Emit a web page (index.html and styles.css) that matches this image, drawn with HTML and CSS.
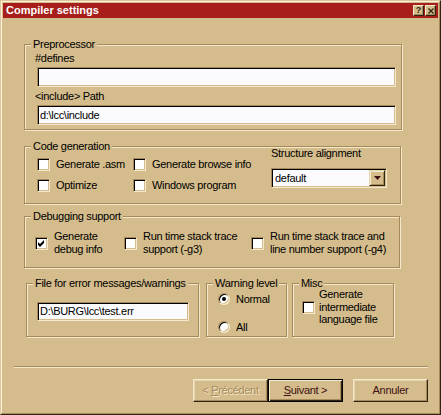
FILE: index.html
```html
<!DOCTYPE html>
<html>
<head>
<meta charset="utf-8">
<link rel="stylesheet" href="styles.css">
</head>
<body>
<div class="window">
  <div class="frame">
    <div class="titlebar">
      <span class="title">Compiler settings</span>
      <span class="tbtns">
        <span class="tbtn">?</span>
        <span class="tbtn"><svg width="6" height="6" viewBox="0 0 6 6"><path d="M0.5 0.5L5.5 5.5M5.5 0.5L0.5 5.5" stroke="#2f2412" stroke-width="1.3"/></svg></span>
      </span>
    </div>
    <div class="client">
      <fieldset class="grp pre">
        <legend>Preprocessor</legend>
        <div class="body">
          <div class="lbl">#defines</div>
          <div class="field"></div>
          <div class="lbl lbl2">&lt;include&gt; Path</div>
          <div class="field">d:\lcc\include</div>
        </div>
      </fieldset>

      <fieldset class="grp code">
        <legend>Code generation</legend>
        <div class="body">
          <div class="cbgrid">
            <div class="chk"><span class="cb"></span><span>Generate .asm</span></div>
            <div class="chk"><span class="cb"></span><span>Generate browse info</span></div>
            <div class="chk"><span class="cb"></span><span>Optimize</span></div>
            <div class="chk"><span class="cb"></span><span>Windows program</span></div>
          </div>
          <div class="align">
            <div class="lbl">Structure alignment</div>
            <div class="combo">
              <span class="ctext">default</span>
              <span class="dd"><svg width="7" height="4" viewBox="0 0 7 4"><path d="M0 0H7L3.5 4Z" fill="#401010"/></svg></span>
            </div>
          </div>
        </div>
      </fieldset>

      <fieldset class="grp debug">
        <legend>Debugging support</legend>
        <div class="body">
          <div class="chk d1"><span class="cb"><svg width="11" height="11" viewBox="0 0 11 11"><path d="M2 4L4 6L8 2V5L4 9L2 7Z" fill="#000"/></svg></span><span>Generate<br>debug info</span></div>
          <div class="chk d2"><span class="cb"></span><span>Run time stack trace<br>support (-g3)</span></div>
          <div class="chk d3"><span class="cb"></span><span>Run time stack trace and<br>line number support (-g4)</span></div>
        </div>
      </fieldset>

      <div class="bottomrow">
        <fieldset class="grp file">
          <legend>File for error messages/warnings</legend>
          <div class="body">
            <div class="field small">D:\BURG\lcc\test.err</div>
          </div>
        </fieldset>
        <fieldset class="grp warn">
          <legend>Warning level</legend>
          <div class="body">
            <div class="radio-item"><span class="radio on"></span><span>Normal</span></div>
            <div class="radio-item second"><span class="radio"></span><span>All</span></div>
          </div>
        </fieldset>
        <fieldset class="grp misc">
          <legend>Misc</legend>
          <div class="body">
            <span class="cb"></span>
            <span class="misclbl">Generate<br>intermediate<br>language file</span>
          </div>
        </fieldset>
      </div>

      <div class="sep"></div>

      <div class="buttons">
        <div class="btn disabled"><span>&lt; <u>P</u>récédent</span></div>
        <div class="btn default"><span><u>S</u>uivant &gt;</span></div>
        <div class="btn cancel"><span>Annuler</span></div>
      </div>
    </div>
  </div>
</div>
</body>
</html>
```

FILE: styles.css
```css
* { box-sizing: border-box; }

body {
  margin: 0;
  font-family: "Liberation Sans", Arial, sans-serif;
  font-size: 11px;
  letter-spacing: -0.3px;
  line-height: 13px;
  color: #000;
  background: #d4bc8c;
}

.window {
  width: 441px;
  height: 415px;
  border: 1px solid;
  border-color: #dcc698 #2f2412 #2f2412 #dcc698;
  background: #d4bc8c;
}

.frame {
  height: 100%;
  border: 1px solid;
  border-color: #fbf1dc #a88a5a #a88a5a #fbf1dc;
  padding: 1px;
  display: flex;
  flex-direction: column;
}

.titlebar {
  height: 15px;
  flex: none;
  background: #a71e1a;
  display: flex;
  align-items: center;
  justify-content: space-between;
  padding: 0 2px 0 3px;
}

.title {
  color: #fff;
  font-weight: bold;
  font-size: 11px;
  letter-spacing: 0;
}

.tbtns { display: flex; gap: 1px; }

.tbtn {
  width: 11px;
  height: 11px;
  background: #d4bc8c;
  border: 1px solid;
  border-color: #f5e9cd #2f2412 #2f2412 #f5e9cd;
  box-shadow: inset -1px -1px 0 #a88a5a;
  display: flex;
  align-items: center;
  justify-content: center;
  font-size: 9px;
  font-weight: bold;
  color: #2f2412;
  line-height: 9px;
  letter-spacing: 0;
}

.client {
  flex: 1;
  padding: 20px 0 0 21px;
}

.grp {
  margin: 0;
  padding: 0;
  min-width: 0;
  border: 1px solid #a88a5a;
  box-shadow: inset 1px 1px 0 #f5e9cd, 1px 1px 0 #f5e9cd;
}

.grp legend {
  margin-left: 6px;
  padding: 0 2px;
  line-height: 13px;
  background: #d4bc8c;
}

.lbl { line-height: 13px; }

.field {
  height: 20px;
  margin: 2px 0 0 2px;
  border: 1px solid;
  border-color: #a88a5a #f5e9cd #f5e9cd #a88a5a;
  box-shadow: inset 1px 1px 0 #000, inset -1px -1px 0 #d4bc8c;
  background: #fbfbfd;
  padding: 0 0 0 2px;
  line-height: 18px;
  white-space: nowrap;
}

/* Preprocessor */
.pre { width: 378px; }
.pre .body { padding: 1px 5px 4px 10px; }
.pre .lbl2 { margin-top: 3px; }

/* Code generation */
.code { width: 377px; margin-top: 10px; }
.code .body {
  display: flex;
  align-items: flex-start;
  padding: 0 4px 11px 12px;
}
.cbgrid {
  display: grid;
  grid-template-columns: 96px 138px;
  row-gap: 8px;
  margin-top: 5px;
}
.chk {
  display: flex;
  align-items: center;
  gap: 6px;
  white-space: nowrap;
}

.cb {
  flex: none;
  width: 13px;
  height: 13px;
  border: 1px solid;
  border-color: #a88a5a #f5e9cd #f5e9cd #a88a5a;
  box-shadow: inset 1px 1px 0 #000, inset -1px -1px 0 #d4bc8c;
  background: #fff;
  display: block;
}
.cb svg { display: block; }

.align { margin-top: -6px; }
.combo {
  margin-top: 8px;
  width: 116px;
  height: 20px;
  border: 1px solid;
  border-color: #a88a5a #f5e9cd #f5e9cd #a88a5a;
  box-shadow: inset 1px 1px 0 #000, inset -1px -1px 0 #d4bc8c;
  background: #fbfbfd;
  display: flex;
  align-items: center;
  padding: 1px 1px 1px 3px;
}
.ctext { flex: 1; }
.dd {
  width: 16px;
  height: 16px;
  background: #d4bc8c;
  border: 1px solid;
  border-color: #e6d6ae #2f2412 #2f2412 #e6d6ae;
  box-shadow: inset 1px 1px 0 #f5e9cd, inset -1px -1px 0 #a88a5a;
  display: flex;
  align-items: center;
  justify-content: center;
}
.dd svg { display: block; }

/* Debugging */
.debug { width: 376px; margin-top: 6px; }
.debug .body {
  display: flex;
  padding: 7px 4px 11px 10px;
}
.debug .chk { align-items: center; line-height: 13px; }
.d1 { width: 89px; }
.d2 { width: 127px; }

/* Bottom row */
.bottomrow {
  display: flex;
  margin-top: 9px;
  margin-left: 2px;
}
.bottomrow .body { height: 46px; }

.file { width: 173px; }
.file .body { padding: 12px 10px 0 10px; }
.field.small { height: 19px; margin: 0; width: 152px; line-height: 17px; }

.warn { width: 81px; margin-left: 7px; }
.warn .body { padding: 3px 0 0 11px; }
.radio-item {
  display: flex;
  align-items: center;
  gap: 6px;
  height: 12px;
}
.radio-item.second { margin-top: 16px; }
.radio {
  flex: none;
  position: relative;
  width: 12px;
  height: 12px;
  border-radius: 50%;
  border: 1px solid;
  border-color: #a88a5a #f5e9cd #f5e9cd #a88a5a;
  box-shadow: inset 1px 1px 0 #000, inset -1px -1px 0 #d4bc8c;
  background: #fff;
}
.radio.on::after {
  content: "";
  position: absolute;
  left: 3px;
  top: 3px;
  width: 4px;
  height: 4px;
  border-radius: 50%;
  background: #000;
}

.misc { width: 102px; margin-left: 5px; }
.misc .body {
  display: flex;
  align-items: flex-start;
  gap: 4px;
  padding-left: 9px;
}
.misc .cb { margin-top: 11px; }
.misclbl { margin-top: -2px; line-height: 12.5px; white-space: nowrap; }

/* Separator */
.sep {
  margin-top: 29px;
  margin-left: -10px;
  width: 414px;
  height: 2px;
  border-top: 1px solid #a88a5a;
  border-bottom: 1px solid #f5e9cd;
}

/* Buttons */
.buttons {
  display: flex;
  justify-content: flex-end;
  margin-top: 11px;
  margin-right: 10px;
}
.btn {
  width: 75px;
  height: 23px;
  background: #d4bc8c;
  border: 1px solid;
  border-color: #f5e9cd #2f2412 #2f2412 #f5e9cd;
  box-shadow: inset -1px -1px 0 #a88a5a, inset 1px 1px 0 #e6d6ae;
  display: flex;
  align-items: center;
  justify-content: center;
  color: #401010;
  white-space: nowrap;
}
.btn.default {
  border-color: #000;
  box-shadow: inset 1px 1px 0 #f5e9cd, inset -1px -1px 0 #2f2412, inset -2px -2px 0 #a88a5a;
}
.btn.disabled {
  color: #a88a5a;
  text-shadow: 1px 1px 0 #f5e9cd;
}
.btn.cancel { margin-left: 10px; }
```
